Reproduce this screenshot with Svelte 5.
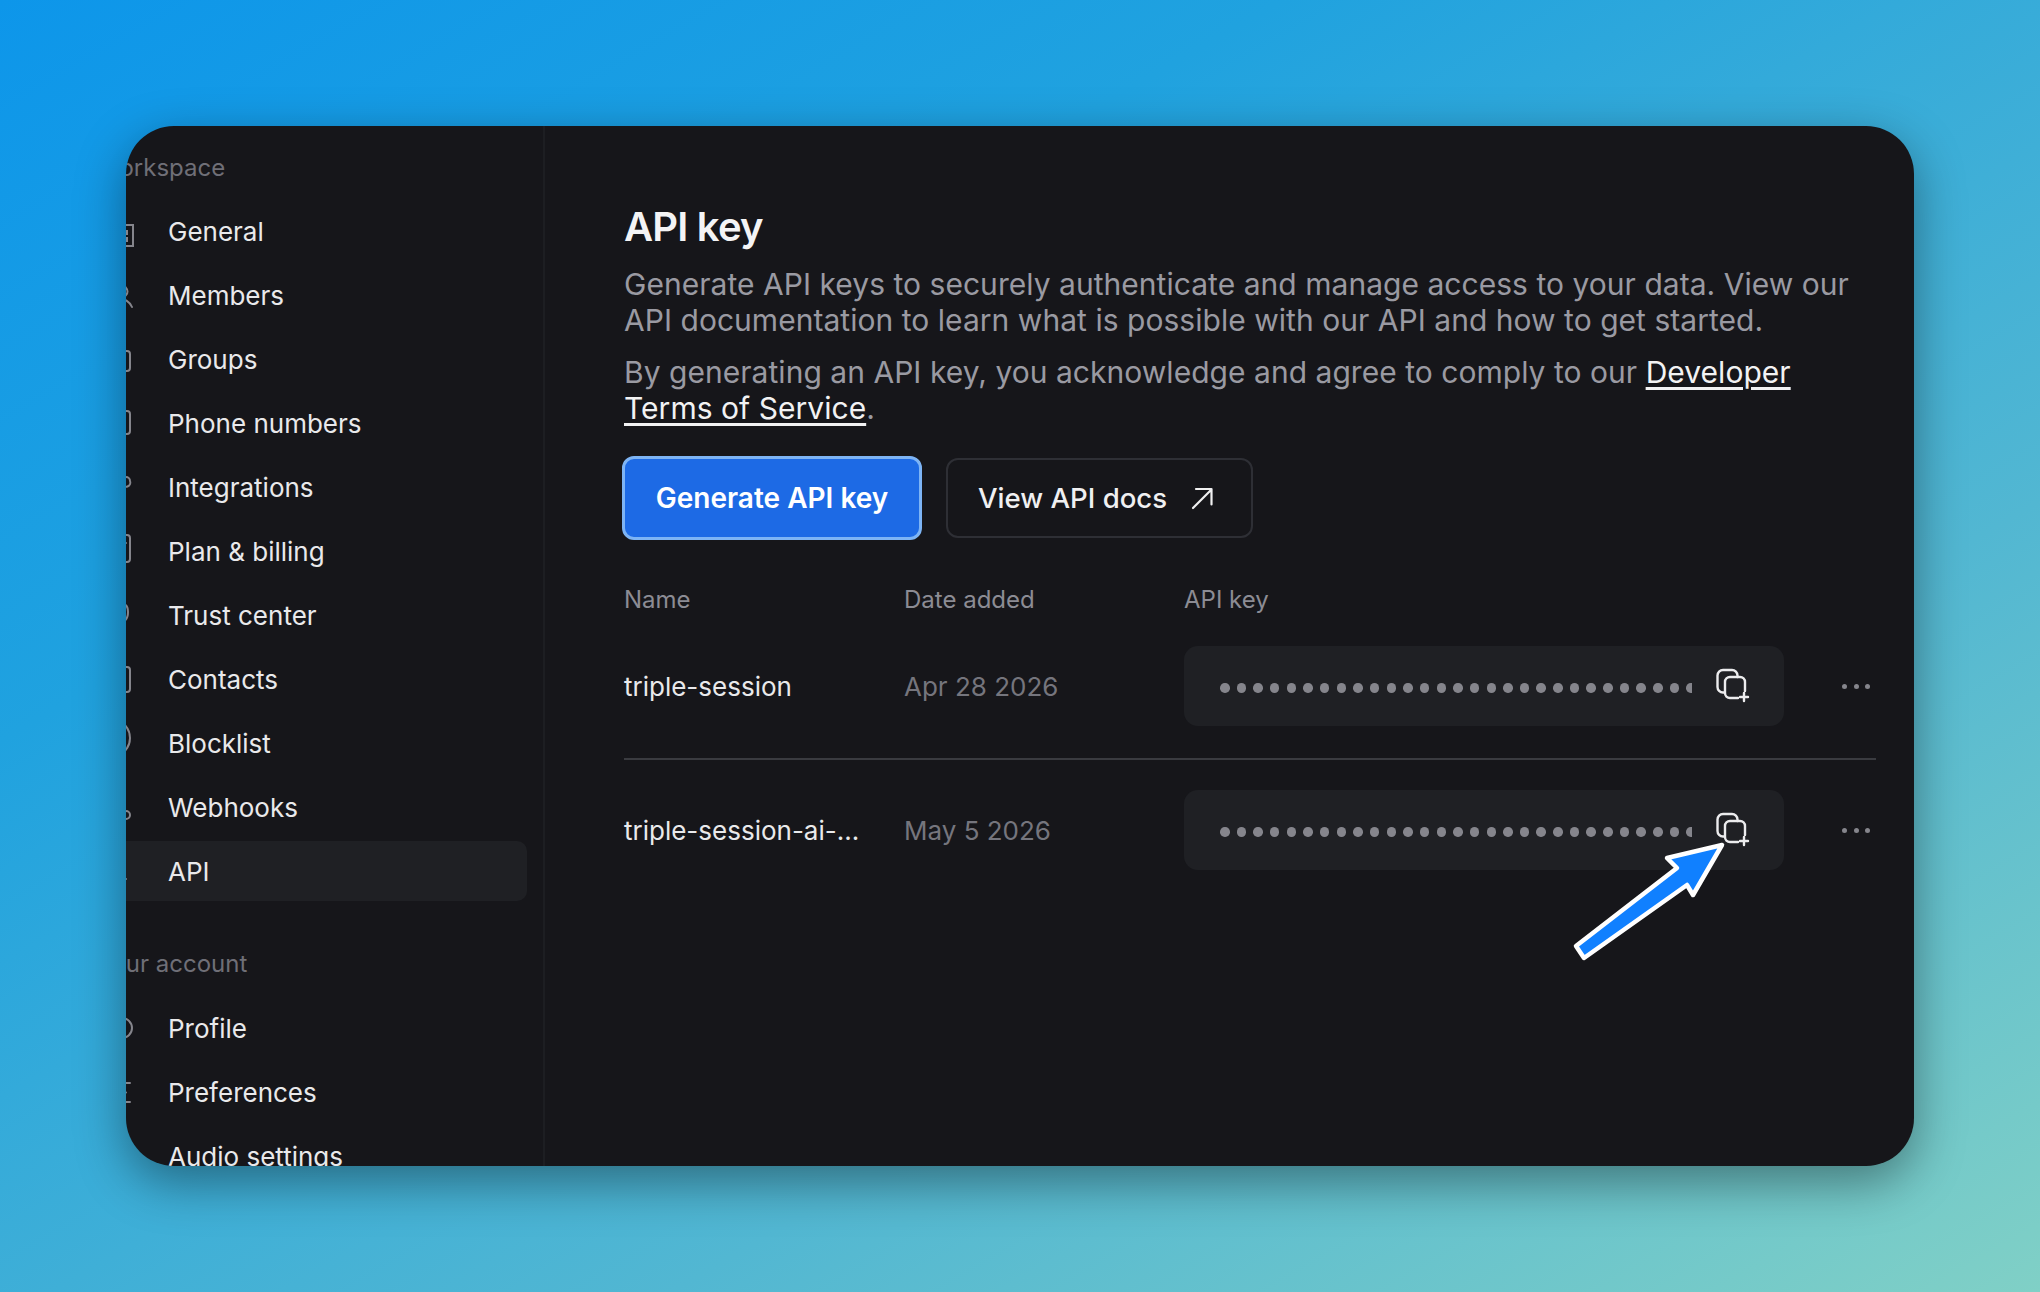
<script lang="ts">
    // right edges of the sidebar icons peek out, the rest is clipped by the panel
    const workspace = [
        { label: "General", icon: "building" },
        { label: "Members", icon: "person" },
        { label: "Groups", icon: "group" },
        { label: "Phone numbers", icon: "phone" },
        { label: "Integrations", icon: "plug" },
        { label: "Plan & billing", icon: "bill" },
        { label: "Trust center", icon: "shield" },
        { label: "Contacts", icon: "book" },
        { label: "Blocklist", icon: "block" },
        { label: "Webhooks", icon: "hook" },
        { label: "API", icon: "code", active: true },
    ];
    const account = [
        { label: "Profile", icon: "circle" },
        { label: "Preferences", icon: "sliders" },
        { label: "Audio settings", icon: "circle" },
    ];
    const paths: Record<string, string> = {
        building: "M10 6H23V27H6M14 12h3v3h-3zM14 19h3v3h-3z",
        person: "M12 3a5 5 0 1 1 0 11a5 5 0 0 1 0-11zM8 15c6 0 12 4 14 9",
        group: "M8 4h9a3 3 0 0 1 3 3v14a3 3 0 0 1-3 3H8M12 4v5a3 3 0 0 0 3 3",
        phone: "M8 0h9a3 3 0 0 1 3 3v17a3 3 0 0 1-3 3H8",
        plug: "M12 6a4 4 0 0 1 8 0a4 4 0 0 1-8 3M12 18a3 3 0 0 0 3 3",
        bill: "M14-4h3a3 3 0 0 1 3 3v21a3 3 0 0 1-3 3H8M12 4h4",
        shield: "M14 1c3 1 4 3 4 8s-1 8-5 10",
        book: "M8 0h9a3 3 0 0 1 3 3v19a3 3 0 0 1-3 3H8",
        circle: "M12 2a10 10 0 0 1 0 20",
        block: "M14-7q6 6 6 14t-6 14",
        hook: "M12 20a4 4 0 1 1 8 0a4 4 0 0 1-8 0",
        code: "M13 20h3",
        sliders: "M3 3h17M3 12.500h13M3 22h17",
    };
    const keys = [
        { name: "triple-session", date: "Apr 28 2026" },
        { name: "triple-session-ai-...", date: "May 5 2026" },
    ];
</script>

<div class="page">
    <div class="panel">
        <aside class="sidebar">
            <div class="sidebar-inner">
                <div class="section-label">Workspace</div>
                {#each workspace as item}
                    <div class="nav-item" class:active={item.active}>
                        <svg class="nav-icon" viewBox="0 0 24 24" fill="none" stroke="currentColor" stroke-width="2" stroke-linecap="round"><path d={paths[item.icon]} /></svg>
                        <span>{item.label}</span>
                    </div>
                {/each}
                <div class="section-label second">Your account</div>
                {#each account as item}
                    <div class="nav-item">
                        <svg class="nav-icon" viewBox="0 0 24 24" fill="none" stroke="currentColor" stroke-width="2" stroke-linecap="round"><path d={paths[item.icon]} /></svg>
                        <span>{item.label}</span>
                    </div>
                {/each}
            </div>
        </aside>

        <main class="content">
            <h1>API key</h1>
            <p class="intro">Generate API keys to securely authenticate and manage access to your data. View our API documentation to learn what is possible with our API and how to get started.</p>
            <p class="intro terms">By generating an API key, you acknowledge and agree to comply to our <a href="#terms">Developer Terms of Service</a>.</p>

            <div class="actions">
                <button class="btn primary">Generate API key</button>
                <button class="btn outline">
                    View API docs
                    <svg viewBox="0 0 24 24" width="24" height="24" fill="none" stroke="currentColor" stroke-width="2.200" stroke-linecap="round" stroke-linejoin="round"><path d="M3 22L21 4M6 3h15.500v15.500" /></svg>
                </button>
            </div>

            <div class="table-head">
                <span>Name</span>
                <span>Date added</span>
                <span>API key</span>
            </div>

            {#each keys as key, i}
                <div class="row" class:divided={i === 0}>
                    <span class="name">{key.name}</span>
                    <span class="date">{key.date}</span>
                    <div class="key-box">
                        <div class="dots">
                            {#each Array(30) as _}
                                <i></i>
                            {/each}
                        </div>
                        <svg class="copy" viewBox="0 0 34 34" width="34" height="34" fill="none" stroke="#ececee" stroke-width="2.400" stroke-linecap="round" stroke-linejoin="round">
                            <path d="M8.500 23.500H7a5.500 5.500 0 0 1-5.500-5.500V6.500A5.500 5.500 0 0 1 7 1h9a5.500 5.500 0 0 1 5.500 5.500V8" />
                            <path d="M22 29h-8a5 5 0 0 1-5-5V13a5 5 0 0 1 5-5h10a5 5 0 0 1 5 5v9" />
                            <path d="M28 24v8M24 28h8" />
                        </svg>
                    </div>
                    <div class="more"><i></i><i></i><i></i></div>
                </div>
            {/each}
        </main>

        <svg class="pointer" viewBox="0 0 170 130" width="170" height="130">
            <path d="M149 4L94 17L104 27L3 105L11 117L114 44L120 54Z" fill="#1080ff" stroke="#fff" stroke-width="4.500" stroke-linejoin="round" />
        </svg>
    </div>
</div>

<style>
    :global(body) {
        margin: 0;
    }

    .page {
        width: 2040px;
        height: 1292px;
        box-sizing: border-box;
        padding: 126px;
        background: linear-gradient(150deg, #0d96ea 0%, #20a2df 30%, #52b7d2 68%, #80d0c6 100%);
        font-family: Inter, "Liberation Sans", sans-serif;
    }

    .panel {
        position: relative;
        display: flex;
        width: 1788px;
        height: 1040px;
        border-radius: 48px;
        background: #16161a;
        overflow: hidden;
        box-shadow: 0 16px 50px rgba(0, 0, 0, 0.4);
    }

    .sidebar {
        flex: 0 0 417px;
        border-right: 2px solid #1d1e22;
        overflow: hidden;
    }

    .sidebar-inner {
        margin-left: -30px;
        margin-right: 16px;
        padding-top: 24px;
    }

    .section-label {
        height: 36px;
        line-height: 36px;
        padding-left: 1px;
        margin-bottom: 15px;
        font-size: 24px;
        color: #6f6f77;
    }

    .section-label.second {
        margin-top: 45px;
        margin-bottom: 16px;
    }

    .nav-item {
        display: flex;
        align-items: center;
        gap: 34px;
        height: 60px;
        margin-bottom: 4px;
        padding-left: 14px;
        border-radius: 10px;
        font-size: 26px;
        color: #e9e9eb;
    }

    .nav-item.active {
        background: #1f2024;
    }

    .nav-icon {
        flex: none;
        width: 24px;
        height: 24px;
        color: #85858c;
        overflow: visible;
    }

    .content {
        flex: 1;
        min-width: 0;
        padding: 76px 38px 0 79px;
    }

    h1 {
        margin: 0 0 14px;
        font-size: 40px;
        line-height: 50px;
        font-weight: 600;
        letter-spacing: -0.8px;
        color: #f4f4f5;
    }

    .intro {
        margin: 0;
        font-size: 30px;
        line-height: 36px;
        letter-spacing: 0.035px;
        color: #9a9aa2;
    }

    .terms {
        margin-top: 16px;
    }

    .terms a {
        color: #f2f2f3;
        text-decoration: underline;
        text-underline-offset: 4px;
    }

    .actions {
        display: flex;
        align-items: center;
        gap: 24px;
        margin-top: 30px;
        margin-left: -2px;
    }

    .btn {
        display: flex;
        align-items: center;
        height: 80px;
        box-sizing: border-box;
        border-radius: 12px;
        font-family: inherit;
        font-size: 28px;
    }

    .primary {
        height: 84px;
        width: 300px;
        justify-content: center;
        background: #1d6ae5;
        border: 3px solid #7db4f5;
        color: #fff;
        font-weight: 600;
    }

    .outline {
        width: 307px;
        padding: 0 0 0 30px;
        gap: 23px;
        background: transparent;
        border: 2px solid #2e2f35;
        color: #f0f0f1;
        font-size: 27.600px;
        font-weight: 500;
    }

    .table-head {
        display: grid;
        grid-template-columns: 280px 280px 1fr;
        margin-top: 42px;
        font-size: 24px;
        line-height: 36px;
        color: #8c8c94;
    }

    .row {
        display: grid;
        grid-template-columns: 280px 280px 600px 1fr;
        align-items: center;
        padding: 28px 0 32px;
    }

    .row.divided {
        border-bottom: 2px solid #3a3b40;
    }

    .row + .row {
        padding-top: 30px;
    }

    .name {
        font-size: 26px;
        color: #e9e9eb;
    }

    .date {
        font-size: 26px;
        color: #75757d;
    }

    .key-box {
        display: flex;
        align-items: center;
        justify-content: space-between;
        height: 80px;
        padding: 0 34px 0 36px;
        border-radius: 14px;
        background: #1f2024;
    }

    .dots {
        display: flex;
        gap: 7.170px;
        width: 472px;
        overflow: hidden;
    }

    .dots i {
        flex: none;
        width: 9.500px;
        height: 9.500px;
        border-radius: 50%;
        background: #85858c;
        margin-top: 4px;
    }

    .copy {
        flex: none;
        overflow: visible;
    }

    .more {
        display: flex;
        justify-content: flex-end;
        gap: 6.500px;
        padding-right: 6px;
    }

    .more i {
        width: 5px;
        height: 5px;
        border-radius: 50%;
        background: #85858c;
    }

    .pointer {
        position: absolute;
        left: 1447px;
        top: 715px;
        overflow: visible;
    }
</style>
